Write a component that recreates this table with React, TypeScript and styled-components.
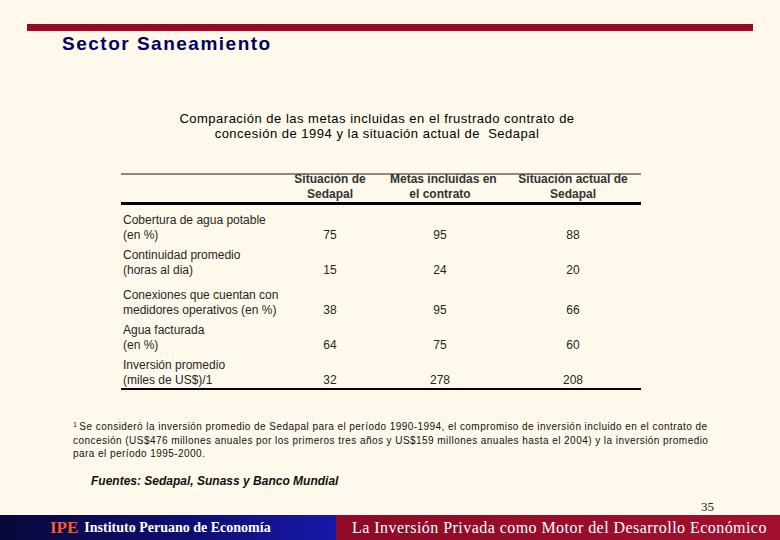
import React from "react";
import styled, { createGlobalStyle } from "styled-components";

const Global = createGlobalStyle`
  html, body { margin: 0; padding: 0; background: #fef9ea; }
  #root { width: 780px; height: 540px; }
`;

const Page = styled.div`
  width: 780px;
  height: 540px;
  background: #fef9ea;
  display: flex;
  flex-direction: column;
  overflow: hidden;
  font-family: "Liberation Sans", Arial, sans-serif;
  & > * { flex-shrink: 0; }
`;

const TopRule = styled.div`
  margin: 24px 27px 0 27px;
  height: 7px;
  background: #9a0a25;
`;

const Title = styled.h1`
  margin: 2px 0 0 62px;
  font-size: 19px;
  line-height: 22px;
  font-weight: bold;
  letter-spacing: 1.5px;
  color: #000066;
`;

const Caption = styled.p`
  margin: 56px 0 0 150px;
  width: 454px;
  text-align: center;
  font-size: 13px;
  line-height: 15px;
  letter-spacing: 0.5px;
  color: #000;
`;

const Table = styled.div`
  margin: 32px 0 0 121px;
  width: 520px;
  border-top: 2px solid #8d8a80;
  border-bottom: 2px solid #000;
  display: flex;
  flex-direction: column;
  color: #262626;
  font-size: 12px;
`;

const HeadRow = styled.div`
  display: grid;
  grid-template-columns: 149px 120px 100px 151px;
  margin-top: -3px;
  border-bottom: 3px solid #000;
  font-weight: bold;
  line-height: 15px;
  color: #333;
`;

const Row = styled.div<{ $gap: number }>`
  display: grid;
  grid-template-columns: 149px 120px 100px 151px;
  margin-top: ${(p) => p.$gap}px;
  line-height: 15px;
`;

const Label = styled.div`
  padding-left: 2px;
  white-space: nowrap;
`;

const Cell = styled.div<{ $shift?: number }>`
  text-align: center;
  align-self: end;
  white-space: nowrap;
  padding-left: ${(p) => p.$shift ?? 0}px;
`;

const Footnote = styled.p`
  margin: 28px 0 0 73px;
  width: 680px;
  font-size: 10px;
  line-height: 13.5px;
  letter-spacing: 0.45px;
  white-space: nowrap;
  color: #111;
`;

const Sup = styled.span`
  font-size: 7px;
  vertical-align: 3px;
  margin-right: 2px;
`;

const Sources = styled.p`
  margin: 13px 0 0 91px;
  font-size: 12px;
  line-height: 14px;
  font-weight: bold;
  font-style: italic;
  color: #111;
`;

const PageNum = styled.div`
  margin: 12px 66px 0 0;
  align-self: flex-end;
  font-family: "Liberation Serif", "Times New Roman", serif;
  font-size: 13px;
  line-height: 14px;
  color: #222;
`;

const Footer = styled.div`
  margin-top: auto;
  height: 25px;
  display: flex;
`;

const FooterLeft = styled.div`
  width: 336px;
  background: linear-gradient(90deg, #08083a 0%, #0e0e70 55%, #1818a8 100%);
  display: flex;
  align-items: center;
  padding-left: 50px;
  box-sizing: border-box;
  font-family: "Liberation Serif", "Times New Roman", serif;
  font-weight: bold;
  color: #fff;
`;

const Brand = styled.span`
  color: #ff5a20;
  font-size: 17px;
  margin-right: 6px;
`;

const BrandName = styled.span`
  font-size: 14px;
`;

const FooterRight = styled.div`
  flex: 1;
  background: linear-gradient(90deg, #8e0a26 0%, #a3102e 100%);
  display: flex;
  align-items: center;
  padding-left: 16px;
  font-family: "Liberation Serif", "Times New Roman", serif;
  font-size: 16px;
  letter-spacing: 0.45px;
  white-space: nowrap;
  color: #fff;
`;

type RowData = { label: [string, string]; v: [string, string, string]; gap: number };

const rows: RowData[] = [
  { label: ["Cobertura de agua potable", "(en %)"], v: ["75", "95", "88"], gap: 8 },
  { label: ["Continuidad promedio", "(horas al dia)"], v: ["15", "24", "20"], gap: 5 },
  { label: ["Conexiones que cuentan con", "medidores operativos (en %)"], v: ["38", "95", "66"], gap: 10 },
  { label: ["Agua facturada", "(en %)"], v: ["64", "75", "60"], gap: 5 },
  { label: ["Inversión promedio", "(miles de US$)/1"], v: ["32", "278", "208"], gap: 5 },
];

export default function App() {
  return (
    <Page>
      <Global />
      <TopRule />
      <Title>Sector Saneamiento</Title>
      <Caption>
        Comparación de las metas incluidas en el frustrado contrato de
        <br />
        concesión de 1994 y la situación actual de&nbsp; Sedapal
      </Caption>
      <Table>
        <HeadRow>
          <div />
          <Cell>
            Situación de
            <br />
            Sedapal
          </Cell>
          <Cell>
            Metas incluidas en
            <br />
            el contrato
          </Cell>
          <Cell $shift={15}>
            Situación actual de
            <br />
            Sedapal
          </Cell>
        </HeadRow>
        {rows.map((r) => (
          <Row key={r.label[0]} $gap={r.gap}>
            <Label>
              {r.label[0]}
              <br />
              {r.label[1]}
            </Label>
            <Cell>{r.v[0]}</Cell>
            <Cell>{r.v[1]}</Cell>
            <Cell $shift={15}>{r.v[2]}</Cell>
          </Row>
        ))}
      </Table>
      <Footnote>
        <Sup>1</Sup>Se consideró la inversión promedio de Sedapal para el período 1990-1994, el compromiso de inversión incluido en el contrato de
        <br />
        concesión (US$476 millones anuales por los primeros tres años y US$159 millones anuales hasta el 2004) y la inversión promedio
        <br />
        para el período 1995-2000.
      </Footnote>
      <Sources>Fuentes: Sedapal, Sunass y Banco Mundial</Sources>
      <PageNum>35</PageNum>
      <Footer>
        <FooterLeft>
          <Brand>IPE</Brand>
          <BrandName>Instituto Peruano de Economía</BrandName>
        </FooterLeft>
        <FooterRight>La Inversión Privada como Motor del Desarrollo Económico</FooterRight>
      </Footer>
    </Page>
  );
}
